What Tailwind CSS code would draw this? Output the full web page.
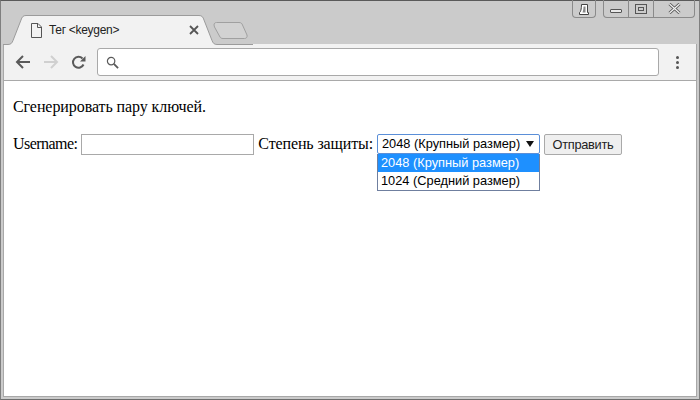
<!DOCTYPE html>
<html lang="ru">
<head>
  <meta charset="utf-8">
  <title>Тег &lt;keygen&gt;</title>
  <script src="https://cdn.jsdelivr.net/npm/@tailwindcss/browser@4"></script>
</head>
<body class="w-[700px] h-[400px] overflow-hidden bg-white">
  <div class="w-[700px] h-[400px] flex flex-col bg-[#cbcbcb] border-t border-t-[#5a5a5a] border-x border-x-[#7f7f7f] border-b border-b-[#6e6e6e] font-['Liberation_Sans',sans-serif] text-black">

    <!-- title bar + tabs -->
    <div class="relative h-[43px] shrink-0">
      <svg class="absolute left-[2px] top-[13px]" width="250" height="31" viewBox="0 0 250 31" fill="none">
        <path d="M0 30.500H5C8 30.500 9 29 10 26.500L18 6C19 3 20 1.500 23 1.500H196C199 1.500 200 3 201 6L209 26.500C210 29 211 30.500 214 30.500H250" fill="#f2f2f2" stroke="#9b9b9b"/>
        <path d="M211 11C211 9.500 212 8.500 213.500 8.500H236C238 8.500 239 9.500 239.500 11L244 21C244.500 23 243.500 24.500 241.500 24.500H220C218.500 24.500 217.500 24 217 23L211.500 13Z" fill="#d2d2d2" stroke="#a0a0a0"/>
      </svg>
      <svg class="absolute left-[29px] top-[22px]" width="13" height="15" viewBox="0 0 13 15" fill="none" stroke="#555">
        <path d="M1.500.5H8L11.500 4V14.500H1.500Z"/><path d="M7.500.5V4.500H11.500"/>
      </svg>
      <span class="absolute left-[48px] top-[21px] text-[12px] leading-[16px] tracking-[-0.3px] text-[#222]">Тег &lt;keygen&gt;</span>
      <svg class="absolute left-[188px] top-[24px]" width="10" height="10" viewBox="0 0 10 10" stroke="#555" stroke-width="1.800">
        <path d="M1 1L9 9M9 1L1 9"/>
      </svg>

      <!-- window buttons -->
      <div class="absolute right-[103px] -top-px w-[24px] h-[18px] flex items-center justify-center border border-t-0 border-[#8a8a8a] rounded-b-[4px]">
        <svg width="12" height="12" viewBox="0 0 12 12" fill="#fff" stroke="#444">
          <path d="M3.500 1.500H9.500V9.500H10.500V11.500H1.500V9.500C2.500 9.500 3.500 6 3.500 1.500Z"/>
          <path d="M5.500 3.500H7.500V9.500H4.500C5 8 5.500 6 5.500 3.500Z" fill="#888" stroke="none"/>
        </svg>
      </div>
      <div class="absolute right-[4px] -top-px w-[92px] h-[18px] flex border border-t-0 border-[#8a8a8a] rounded-b-[4px]">
        <div class="w-[25px] flex items-center justify-center border-r border-[#8a8a8a]">
          <div class="w-[12px] h-[4px] mt-[4px] bg-[#e8e8e8] border border-[#555] rounded-[1px]"></div>
        </div>
        <div class="w-[25px] flex items-center justify-center border-r border-[#8a8a8a]">
          <div class="w-[12px] h-[10px] flex items-center justify-center border border-[#555]">
            <div class="w-[6px] h-[4px] border border-[#555]"></div>
          </div>
        </div>
        <div class="flex-1 flex items-center justify-center">
          <svg width="13" height="11" viewBox="0 0 13 11" fill="none">
            <path d="M1.500 1L11.500 10M11.500 1L1.500 10" stroke="#555" stroke-width="3"/>
            <path d="M1.500 1L11.500 10M11.500 1L1.500 10" stroke="#f4f4f4" stroke-width="1.200"/>
          </svg>
        </div>
      </div>
    </div>

    <div class="flex-1 flex flex-col mx-[2px] mb-[2px] border-x border-b border-[#a8a8a8] min-h-0">
      <!-- toolbar -->
      <div class="h-[37px] shrink-0 flex items-center bg-[#f2f2f2] border-b border-[#a9a9a9] pl-[11px] pr-[14px]">
        <svg width="16" height="14" viewBox="0 0 16 14" fill="none" stroke="#5a5a5a" stroke-width="2">
          <path d="M15 7H2M8 1L2 7L8 13"/>
        </svg>
        <svg class="ml-[12px]" width="16" height="14" viewBox="0 0 16 14" fill="none" stroke="#d0d0d0" stroke-width="2">
          <path d="M1 7H14M8 1L14 7L8 13"/>
        </svg>
        <svg class="ml-[12px]" width="15" height="15" viewBox="0 0 15 15" fill="none">
          <path d="M12.500 9.500A5.500 5.500 0 1 1 11.500 3.500" stroke="#5a5a5a" stroke-width="2"/>
          <path d="M9 6.500H14.500V1Z" fill="#5a5a5a"/>
        </svg>
        <div class="ml-[11px] w-[562px] h-[28px] flex items-center pl-[8px] bg-white border border-[#a9a9a9] rounded-[3px]">
          <svg width="13" height="13" viewBox="0 0 14 14" fill="none" stroke="#5a5a5a">
            <circle cx="5.500" cy="5.500" r="4" stroke-width="1.300"/><path d="M8.500 8.500L13 13" stroke-width="2"/>
          </svg>
        </div>
        <div class="ml-[17px] flex flex-col gap-[2px]">
          <div class="w-[3px] h-[3px] bg-[#555] rounded-full"></div>
          <div class="w-[3px] h-[3px] bg-[#555] rounded-full"></div>
          <div class="w-[3px] h-[3px] bg-[#555] rounded-full"></div>
        </div>
      </div>

      <!-- page -->
      <div class="relative flex-1 bg-white pl-[9px] font-['Liberation_Serif',serif] text-[16px] leading-[18px]">
        <p class="pt-[17px] tracking-[-0.08px]">Сгенерировать пару ключей.</p>
        <form class="mt-[18px] flex items-start">
          <label class="mt-[1px] tracking-[-0.55px]">Username:</label>
          <input class="ml-[4px] w-[173px] h-[21px] bg-white border border-[#a9a9a9]">
          <label class="ml-[4px] mt-[1px] tracking-[-0.13px]">Степень защиты:</label>
          <div class="relative ml-[4px] w-[163px] h-[20px]">
            <div class="h-[20px] flex items-center pl-[4px] bg-white border border-[#5b8fd8] rounded-[2px] font-['Liberation_Sans',sans-serif] text-[12.800px]">
              2048 (Крупный размер)
              <svg class="ml-[6px]" width="8" height="6" viewBox="0 0 8 6" fill="#111"><path d="M0 0H8L4 6Z"/></svg>
            </div>
            <ul class="absolute left-0 top-[20px] w-[163px] bg-white border border-t-0 border-[#6f7f9f] font-['Liberation_Sans',sans-serif] text-[12.800px] leading-[18px]">
              <li class="h-[18px] pl-[3px] bg-[#1e90ff] text-white">2048 (Крупный размер)</li>
              <li class="h-[18px] pl-[3px]">1024 (Средний размер)</li>
            </ul>
          </div>
          <button type="button" class="ml-[4px] w-[78px] h-[21px] bg-[#efefef] border border-[#a9a9a9] rounded-[2px] font-['Liberation_Sans',sans-serif] text-[12.800px] tracking-[-0.3px] leading-[18px] text-[#222]">Отправить</button>
        </form>
      </div>
    </div>
  </div>
</body>
</html>
